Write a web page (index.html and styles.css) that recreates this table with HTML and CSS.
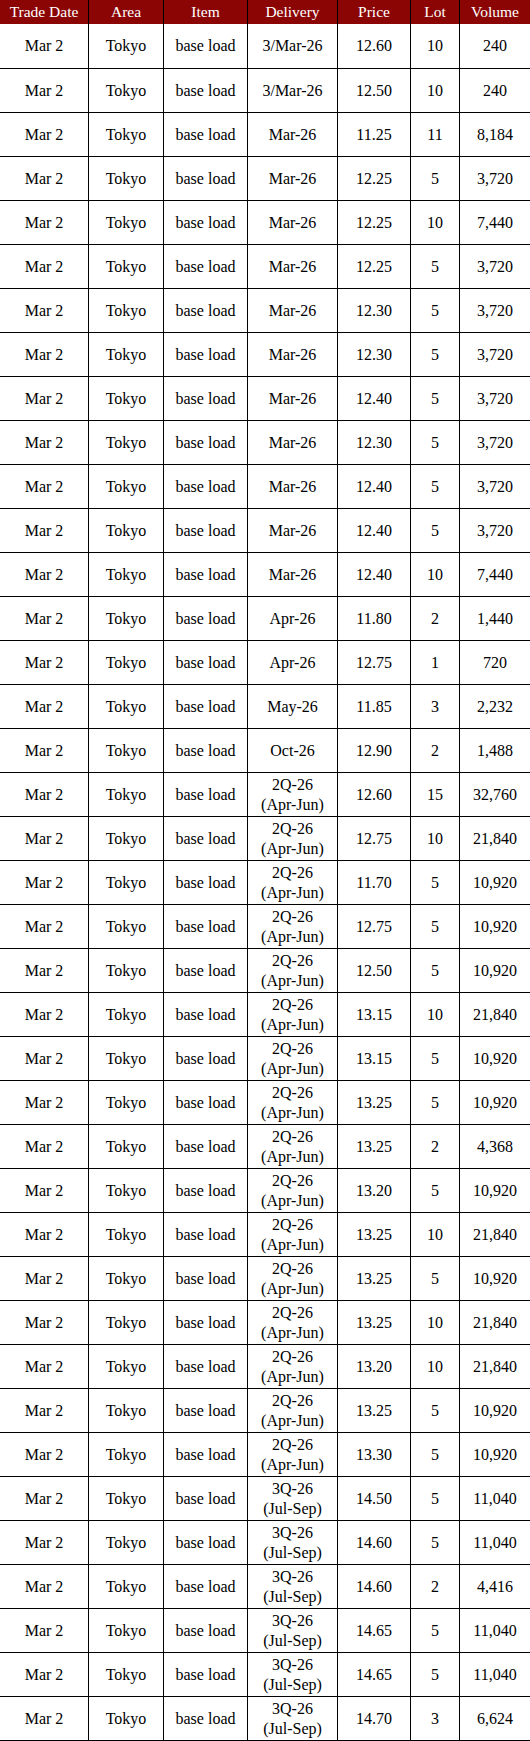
FILE: index.html
```html
<!DOCTYPE html>
<html>
<head>
<meta charset="utf-8">
<link rel="stylesheet" href="styles.css">
</head>
<body>
<table class="trades">
<colgroup>
<col class="c-date"><col class="c-area"><col class="c-item"><col class="c-del"><col class="c-price"><col class="c-lot"><col class="c-vol">
</colgroup>
<thead>
<tr><th>Trade Date</th><th>Area</th><th>Item</th><th>Delivery</th><th>Price</th><th>Lot</th><th>Volume</th></tr>
</thead>
<tbody>
<tr><td>Mar 2</td><td>Tokyo</td><td>base load</td><td>3/Mar-26</td><td>12.60</td><td>10</td><td>240</td></tr>
<tr><td>Mar 2</td><td>Tokyo</td><td>base load</td><td>3/Mar-26</td><td>12.50</td><td>10</td><td>240</td></tr>
<tr><td>Mar 2</td><td>Tokyo</td><td>base load</td><td>Mar-26</td><td>11.25</td><td>11</td><td>8,184</td></tr>
<tr><td>Mar 2</td><td>Tokyo</td><td>base load</td><td>Mar-26</td><td>12.25</td><td>5</td><td>3,720</td></tr>
<tr><td>Mar 2</td><td>Tokyo</td><td>base load</td><td>Mar-26</td><td>12.25</td><td>10</td><td>7,440</td></tr>
<tr><td>Mar 2</td><td>Tokyo</td><td>base load</td><td>Mar-26</td><td>12.25</td><td>5</td><td>3,720</td></tr>
<tr><td>Mar 2</td><td>Tokyo</td><td>base load</td><td>Mar-26</td><td>12.30</td><td>5</td><td>3,720</td></tr>
<tr><td>Mar 2</td><td>Tokyo</td><td>base load</td><td>Mar-26</td><td>12.30</td><td>5</td><td>3,720</td></tr>
<tr><td>Mar 2</td><td>Tokyo</td><td>base load</td><td>Mar-26</td><td>12.40</td><td>5</td><td>3,720</td></tr>
<tr><td>Mar 2</td><td>Tokyo</td><td>base load</td><td>Mar-26</td><td>12.30</td><td>5</td><td>3,720</td></tr>
<tr><td>Mar 2</td><td>Tokyo</td><td>base load</td><td>Mar-26</td><td>12.40</td><td>5</td><td>3,720</td></tr>
<tr><td>Mar 2</td><td>Tokyo</td><td>base load</td><td>Mar-26</td><td>12.40</td><td>5</td><td>3,720</td></tr>
<tr><td>Mar 2</td><td>Tokyo</td><td>base load</td><td>Mar-26</td><td>12.40</td><td>10</td><td>7,440</td></tr>
<tr><td>Mar 2</td><td>Tokyo</td><td>base load</td><td>Apr-26</td><td>11.80</td><td>2</td><td>1,440</td></tr>
<tr><td>Mar 2</td><td>Tokyo</td><td>base load</td><td>Apr-26</td><td>12.75</td><td>1</td><td>720</td></tr>
<tr><td>Mar 2</td><td>Tokyo</td><td>base load</td><td>May-26</td><td>11.85</td><td>3</td><td>2,232</td></tr>
<tr><td>Mar 2</td><td>Tokyo</td><td>base load</td><td>Oct-26</td><td>12.90</td><td>2</td><td>1,488</td></tr>
<tr><td>Mar 2</td><td>Tokyo</td><td>base load</td><td>2Q-26<br>(Apr-Jun)</td><td>12.60</td><td>15</td><td>32,760</td></tr>
<tr><td>Mar 2</td><td>Tokyo</td><td>base load</td><td>2Q-26<br>(Apr-Jun)</td><td>12.75</td><td>10</td><td>21,840</td></tr>
<tr><td>Mar 2</td><td>Tokyo</td><td>base load</td><td>2Q-26<br>(Apr-Jun)</td><td>11.70</td><td>5</td><td>10,920</td></tr>
<tr><td>Mar 2</td><td>Tokyo</td><td>base load</td><td>2Q-26<br>(Apr-Jun)</td><td>12.75</td><td>5</td><td>10,920</td></tr>
<tr><td>Mar 2</td><td>Tokyo</td><td>base load</td><td>2Q-26<br>(Apr-Jun)</td><td>12.50</td><td>5</td><td>10,920</td></tr>
<tr><td>Mar 2</td><td>Tokyo</td><td>base load</td><td>2Q-26<br>(Apr-Jun)</td><td>13.15</td><td>10</td><td>21,840</td></tr>
<tr><td>Mar 2</td><td>Tokyo</td><td>base load</td><td>2Q-26<br>(Apr-Jun)</td><td>13.15</td><td>5</td><td>10,920</td></tr>
<tr><td>Mar 2</td><td>Tokyo</td><td>base load</td><td>2Q-26<br>(Apr-Jun)</td><td>13.25</td><td>5</td><td>10,920</td></tr>
<tr><td>Mar 2</td><td>Tokyo</td><td>base load</td><td>2Q-26<br>(Apr-Jun)</td><td>13.25</td><td>2</td><td>4,368</td></tr>
<tr><td>Mar 2</td><td>Tokyo</td><td>base load</td><td>2Q-26<br>(Apr-Jun)</td><td>13.20</td><td>5</td><td>10,920</td></tr>
<tr><td>Mar 2</td><td>Tokyo</td><td>base load</td><td>2Q-26<br>(Apr-Jun)</td><td>13.25</td><td>10</td><td>21,840</td></tr>
<tr><td>Mar 2</td><td>Tokyo</td><td>base load</td><td>2Q-26<br>(Apr-Jun)</td><td>13.25</td><td>5</td><td>10,920</td></tr>
<tr><td>Mar 2</td><td>Tokyo</td><td>base load</td><td>2Q-26<br>(Apr-Jun)</td><td>13.25</td><td>10</td><td>21,840</td></tr>
<tr><td>Mar 2</td><td>Tokyo</td><td>base load</td><td>2Q-26<br>(Apr-Jun)</td><td>13.20</td><td>10</td><td>21,840</td></tr>
<tr><td>Mar 2</td><td>Tokyo</td><td>base load</td><td>2Q-26<br>(Apr-Jun)</td><td>13.25</td><td>5</td><td>10,920</td></tr>
<tr><td>Mar 2</td><td>Tokyo</td><td>base load</td><td>2Q-26<br>(Apr-Jun)</td><td>13.30</td><td>5</td><td>10,920</td></tr>
<tr><td>Mar 2</td><td>Tokyo</td><td>base load</td><td>3Q-26<br>(Jul-Sep)</td><td>14.50</td><td>5</td><td>11,040</td></tr>
<tr><td>Mar 2</td><td>Tokyo</td><td>base load</td><td>3Q-26<br>(Jul-Sep)</td><td>14.60</td><td>5</td><td>11,040</td></tr>
<tr><td>Mar 2</td><td>Tokyo</td><td>base load</td><td>3Q-26<br>(Jul-Sep)</td><td>14.60</td><td>2</td><td>4,416</td></tr>
<tr><td>Mar 2</td><td>Tokyo</td><td>base load</td><td>3Q-26<br>(Jul-Sep)</td><td>14.65</td><td>5</td><td>11,040</td></tr>
<tr><td>Mar 2</td><td>Tokyo</td><td>base load</td><td>3Q-26<br>(Jul-Sep)</td><td>14.65</td><td>5</td><td>11,040</td></tr>
<tr><td>Mar 2</td><td>Tokyo</td><td>base load</td><td>3Q-26<br>(Jul-Sep)</td><td>14.70</td><td>3</td><td>6,624</td></tr>
</tbody>
</table>
</body>
</html>
```
FILE: styles.css
```css
html, body {
  margin: 0;
  padding: 0;
  background: #ffffff;
}

.trades {
  width: 530px;
  table-layout: fixed;
  border-collapse: separate;
  border-spacing: 0;
  font-family: "Liberation Serif", "Times New Roman", serif;
  font-size: 16px;
  color: #000000;
}

.c-date { width: 89px; }
.c-area { width: 75px; }
.c-item { width: 84px; }
.c-del { width: 90px; }
.c-price { width: 73px; }
.c-lot { width: 49px; }
.c-vol { width: 70px; }

.trades th,
.trades td {
  padding: 0;
  text-align: center;
  vertical-align: middle;
  border-right: 1px solid #000000;
  box-sizing: border-box;
}

.trades th:last-child,
.trades td:last-child {
  border-right: none;
}

.trades th {
  height: 24px;
  background: #8c0505;
  color: #ffffff;
  font-weight: normal;
  font-size: 15.5px;
  line-height: 18px;
}

.trades td {
  height: 44px;
  line-height: 20px;
  border-bottom: 1px solid #000000;
}

.trades tbody tr:first-child td {
  height: 45px;
}
```
